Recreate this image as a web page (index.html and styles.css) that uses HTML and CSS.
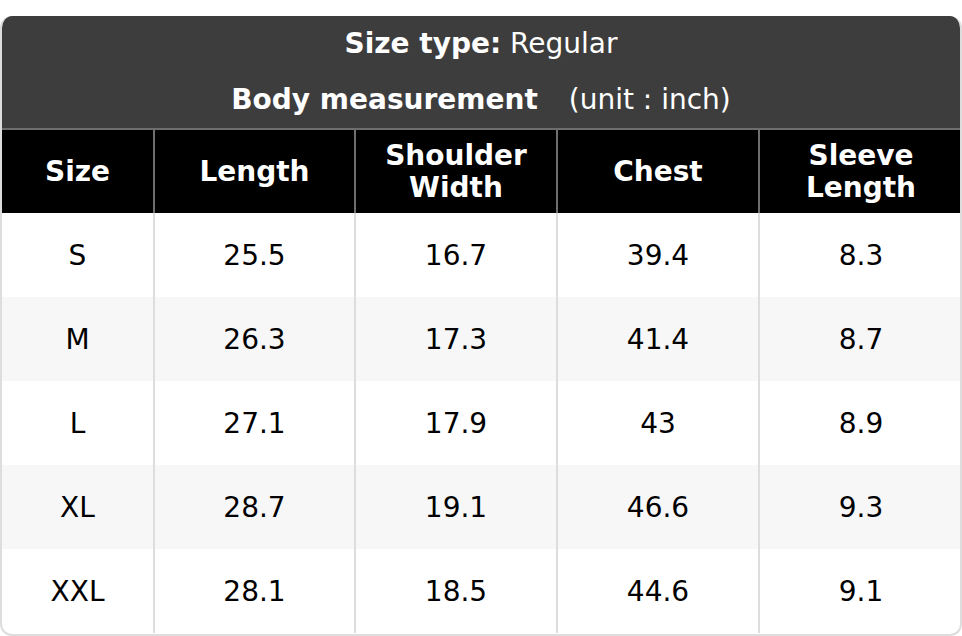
FILE: index.html
```html
<!DOCTYPE html>
<html>
<head>
<meta charset="utf-8">
<link rel="stylesheet" href="styles.css">
</head>
<body>
<div class="chart">
  <div class="title">
    <div class="line"><b>Size type:</b> Regular</div>
    <div class="line"><b>Body measurement</b><span class="unit">(unit : inch)</span></div>
  </div>
  <table class="grid">
    <colgroup>
      <col class="c1"><col class="c2"><col class="c3"><col class="c4"><col class="c5">
    </colgroup>
    <thead>
      <tr><th>Size</th><th>Length</th><th>Shoulder<br>Width</th><th>Chest</th><th>Sleeve<br>Length</th></tr>
    </thead>
    <tbody>
      <tr><td>S</td><td>25.5</td><td>16.7</td><td>39.4</td><td>8.3</td></tr>
      <tr><td>M</td><td>26.3</td><td>17.3</td><td>41.4</td><td>8.7</td></tr>
      <tr><td>L</td><td>27.1</td><td>17.9</td><td>43</td><td>8.9</td></tr>
      <tr><td>XL</td><td>28.7</td><td>19.1</td><td>46.6</td><td>9.3</td></tr>
      <tr><td>XXL</td><td>28.1</td><td>18.5</td><td>44.6</td><td>9.1</td></tr>
    </tbody>
  </table>
</div>
</body>
</html>
```
FILE: styles.css
```css
html, body {
  margin: 0;
  padding: 0;
  background: #ffffff;
}
body {
  padding-top: 16px;
  font-family: "DejaVu Sans", sans-serif;
}
.chart {
  width: 962px;
  height: 620px;
  box-sizing: border-box;
  border: 2px solid #dddddd;
  border-top: none;
  border-radius: 12px;
  overflow: hidden;
  background: #ffffff;
}
.title {
  background: #3d3d3d;
  color: #ffffff;
  text-align: center;
  font-size: 28px;
  height: 112px;
  display: flex;
  flex-direction: column;
}
.line {
  height: 56px;
  line-height: 56px;
}
.unit {
  margin-left: 31px;
}
.grid {
  width: 960px;
  border-collapse: collapse;
  table-layout: fixed;
}
.c1 { width: 152px; }
.c2 { width: 201px; }
.c3 { width: 202px; }
.c4 { width: 202px; }
.c5 { width: 203px; }
thead th {
  background: #000000;
  color: #ffffff;
  font-size: 28px;
  font-weight: bold;
  line-height: 32px;
  height: 84px;
  padding: 0;
  border-top: 2px solid #6e6e6e;
  border-left: 2px solid #6e6e6e;
  box-sizing: border-box;
}
thead th:first-child { border-left: none; }
tbody td {
  text-align: center;
  font-size: 28px;
  color: #000000;
  height: 84px;
  padding: 0;
  border-left: 2px solid #dddddd;
  box-sizing: border-box;
}
tbody td:first-child { border-left: none; }
tbody tr:nth-child(even) td { background: #f7f7f7; }
```
